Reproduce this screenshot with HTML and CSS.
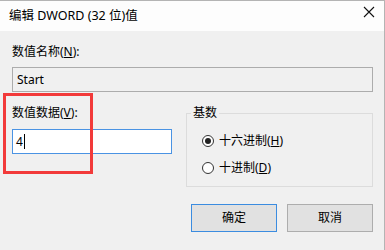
FILE: index.html
```html
<!DOCTYPE html>
<html>
<head>
<meta charset="utf-8">
<link rel="stylesheet" href="styles.css">
</head>
<body>
<div class="window">
  <div class="titlebar">
    <span class="title">编辑 DWORD (32 位)值</span>
    <svg class="close" width="12" height="12" viewBox="0 0 12 12"><path d="M1 1 L11 11 M11 1 L1 11" stroke="#111" stroke-width="1.1" fill="none"/></svg>
  </div>
  <div class="content">
    <div class="label">数值名称(<u>N</u>):</div>
    <div class="textbox readonly">Start</div>
    <div class="row">
      <div class="leftcol">
        <div class="label">数值数据(<u>V</u>):</div>
        <div class="textbox focused">4<span class="caret"></span></div>
      </div>
      <fieldset class="group">
        <legend>基数</legend>
        <div class="radio"><span class="dot checked"></span>十六进制(<u>H</u>)</div>
        <div class="radio second"><span class="dot"></span>十进制(<u>D</u>)</div>
      </fieldset>
    </div>
    <div class="buttons">
      <div class="btn default">确定</div>
      <div class="btn">取消</div>
    </div>
  </div>
  <div class="highlight"></div>
</div>
</body>
</html>
```
FILE: styles.css
```css
html, body {
  margin: 0;
  padding: 0;
}
body {
  width: 385px;
  height: 250px;
  overflow: hidden;
  background: #f0f0f0;
  font-family: "Noto Sans", "Noto Sans CJK SC", sans-serif;
  font-size: 12px;
  color: #000;
}
.window {
  position: relative;
  height: 249px;
  border-top: 1px solid #b4b4b4;
  border-right: 1px solid #b4b4b4;
  background: #f0f0f0;
}
.titlebar {
  height: 30px;
  background: #fdfdfd;
  display: flex;
  justify-content: space-between;
  align-items: flex-start;
}
.title {
  margin-left: 9px;
  margin-top: 7px;
  line-height: 16px;
  font-size: 12.5px;
}
.close {
  margin-top: 5px;
  margin-right: 9px;
}
.content {
  padding: 13px 11px 0 12px;
}
.label {
  line-height: 16px;
  height: 16px;
}
u {
  text-decoration: underline;
  text-underline-offset: 1px;
}
.textbox {
  box-sizing: border-box;
  height: 25px;
  line-height: 23px;
  padding-left: 4px;
  border: 1px solid #acacac;
}
.readonly {
  margin-top: 7px;
  background: #f0f0f0;
}
.focused {
  margin-top: 8px;
  background: #fff;
  border-color: #4a93e3;
  padding-left: 3px;
  display: flex;
  align-items: center;
}
.caret {
  display: inline-block;
  width: 1px;
  height: 15px;
  background: #000;
  margin-left: 1px;
}
.row {
  display: flex;
  margin-top: 13px;
}
.leftcol {
  width: 160px;
}
.group {
  margin: 0 0 0 14px;
  padding: 0 0 10px 0;
  width: 187px;
  box-sizing: border-box;
  border: 1px solid #dcdcdc;
  min-inline-size: 0;
}
.group legend {
  margin-left: 4px;
  padding: 0 2px;
  line-height: 16px;
}
.radio {
  display: flex;
  align-items: center;
  height: 16px;
  line-height: 16px;
  margin-top: 12px;
  margin-left: 15px;
}
.radio.second {
  margin-top: 11px;
}
.dot {
  box-sizing: border-box;
  width: 12px;
  height: 12px;
  border: 1px solid #333;
  border-radius: 50%;
  background: #fff;
  margin-right: 5px;
  display: flex;
  align-items: center;
  justify-content: center;
}
.dot.checked::after {
  content: "";
  width: 6px;
  height: 6px;
  border-radius: 50%;
  background: #222;
}
.buttons {
  display: flex;
  justify-content: flex-end;
  gap: 10px;
  margin-top: 17px;
}
.btn {
  box-sizing: border-box;
  width: 86px;
  height: 28px;
  line-height: 26px;
  text-align: center;
  background: #e1e1e1;
  border: 1px solid #adadad;
}
.btn.default {
  border-color: #3b8ce0;
}
.highlight {
  position: absolute;
  left: 3px;
  top: 92px;
  width: 90px;
  height: 81px;
  box-sizing: border-box;
  border: 3px solid #f23a3a;
}
```
